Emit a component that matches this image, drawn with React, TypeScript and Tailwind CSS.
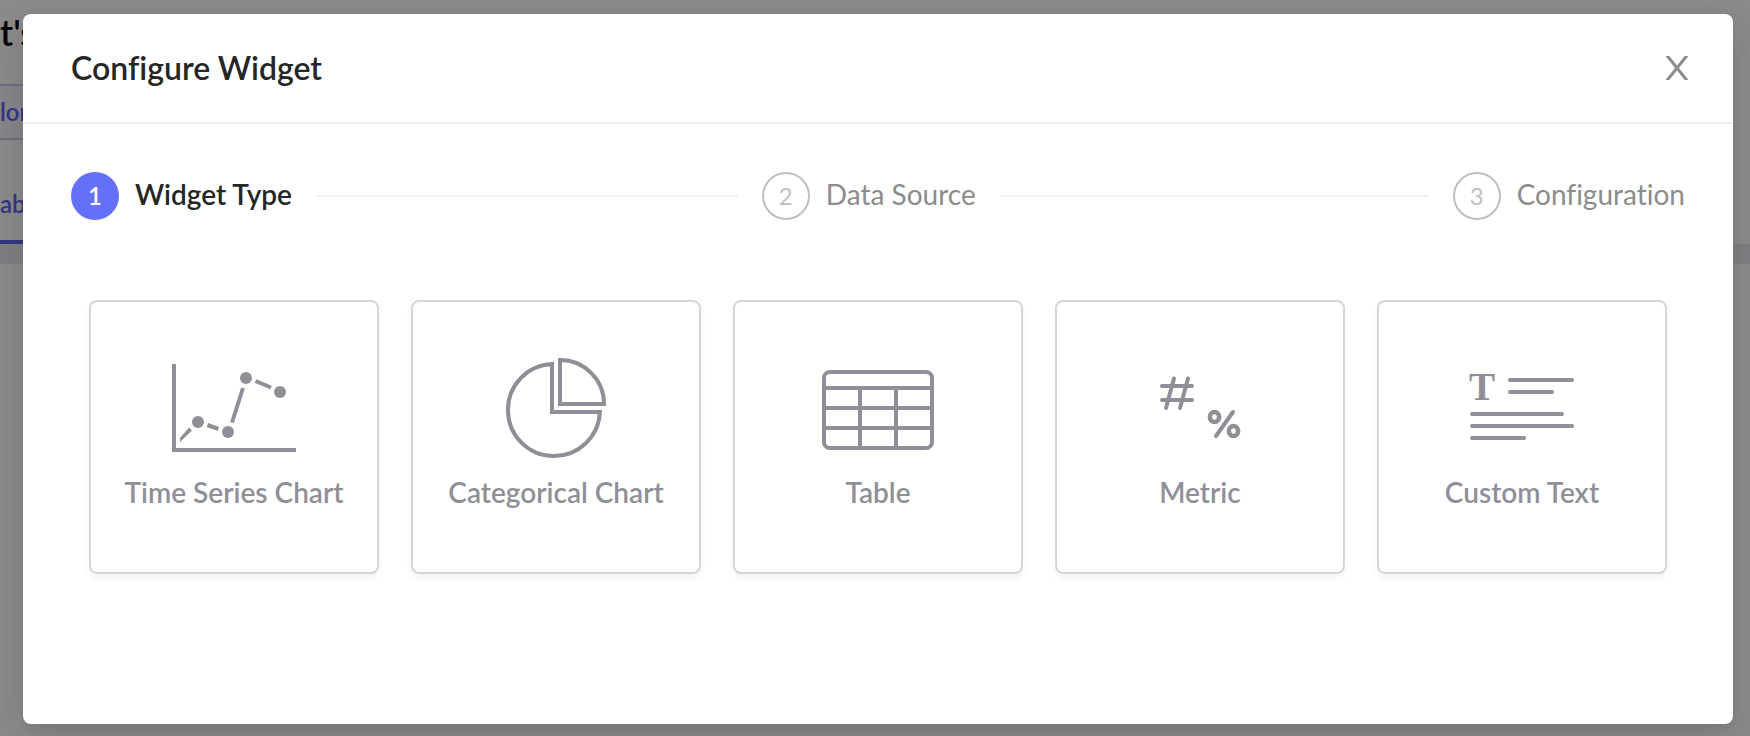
import React, { useState } from "react";

const TimeSeriesIcon = () => (
  <svg width="128" height="104" viewBox="0 0 128 104" fill="none" stroke="currentColor" strokeWidth="4" aria-hidden="true">
    <path d="M4 8V94H126" />
    <path d="M10 87V82L19 71.5L22 74.5L10 86Z" fill="currentColor" stroke="none" />
    <path d="M37.5 69L48.5 73M62 66.5L73 32M85.5 25L101 31.5" />
    <g fill="currentColor" stroke="none">
      <circle cx="28" cy="66" r="6" />
      <circle cx="58" cy="76" r="6" />
      <circle cx="76" cy="22" r="6" />
      <circle cx="110" cy="36" r="6" />
    </g>
  </svg>
);

const CategoricalIcon = () => (
  <svg width="128" height="104" viewBox="0 0 128 104" fill="none" stroke="currentColor" strokeWidth="4" aria-hidden="true">
    <path d="M60 8.1A46 46 0 1 0 107.9 56H60Z" />
    <path d="M68 4A44 44 0 0 1 112 48H68Z" />
  </svg>
);

const TableIcon = () => (
  <svg width="128" height="104" viewBox="0 0 128 104" fill="none" stroke="currentColor" strokeWidth="4" aria-hidden="true">
    <rect x="10" y="16" width="108" height="76" rx="6" />
    <path d="M10 32H118M10 52H118M10 72H118M46 32V92M82 32V92" />
  </svg>
);

const MetricIcon = () => (
  <svg width="128" height="104" viewBox="0 0 128 104" fill="none" stroke="currentColor" strokeWidth="4" strokeLinecap="round" aria-hidden="true">
    <path d="M26 30H56M26 44H56M38 22.5L30 52M52 22.5L44 52" />
    <path d="M97 56L80 80" />
    <ellipse cx="78.500" cy="61" rx="4.600" ry="5" strokeWidth="4.600" />
    <ellipse cx="97.500" cy="75" rx="4.600" ry="5" strokeWidth="4.600" />
  </svg>
);

const CustomTextIcon = () => (
  <svg width="128" height="104" viewBox="0 0 128 104" fill="none" stroke="currentColor" strokeWidth="4" strokeLinecap="round" aria-hidden="true">
    <text x="24" y="44" textAnchor="middle" fontSize="39" fontWeight="700" fill="currentColor" stroke="none" className="font-['Liberation_Serif',serif]">
      T
    </text>
    <path d="M52 24H114M52 36H94M14 58H104M14 70H114M14 82H66" />
  </svg>
);

const widgetTypes = [
  { id: "time-series", label: "Time Series Chart", icon: <TimeSeriesIcon /> },
  { id: "categorical", label: "Categorical Chart", icon: <CategoricalIcon /> },
  { id: "table", label: "Table", icon: <TableIcon /> },
  { id: "metric", label: "Metric", icon: <MetricIcon /> },
  { id: "custom-text", label: "Custom Text", icon: <CustomTextIcon /> },
];

const steps = ["Widget Type", "Data Source", "Configuration"];

const PageBehind = () => (
  <div className="min-h-screen bg-white" aria-hidden="true">
    <div className="flex h-21 items-start pt-3 text-4xl font-semibold text-black">t's</div>
    <div className="flex h-14 w-40 items-center border-y-2 border-[#c8cbf5] bg-[#f7f7ff] text-2xl font-semibold text-[#5f67f5]">
      lor
    </div>
    <div className="flex h-26 w-40 items-center border-b-4 border-[#5f67f5] pt-7 text-2xl font-semibold text-[#5f67f5]">
      abe
    </div>
    <div className="h-5 border-b border-[#e4e7ec] bg-[#e9ecf2]" />
  </div>
);

const App = () => {
  const [open, setOpen] = useState(true);
  const [selected, setSelected] = useState("");

  return (
    <div className="relative min-h-screen overflow-hidden font-[Lato,sans-serif] [font-variant-ligatures:none]">
      <PageBehind />
      {open && (
        <div className="absolute inset-0 bg-black/45 pt-[14px] pr-[17px] pb-3 pl-[23px]">
          <div
            role="dialog"
            aria-labelledby="dialog-title"
            className="rounded-lg bg-white shadow-[0_6px_12px_-8px_rgba(0,0,0,0.12),0_12px_32px_0_rgba(0,0,0,0.08),0_18px_56px_16px_rgba(0,0,0,0.05)]"
          >
            <header className="flex items-center justify-between border-b-2 border-[#f0f0f0] px-12 py-8">
              <h2 id="dialog-title" className="text-[32px] leading-11 font-semibold text-[#262626]">
                Configure Widget
              </h2>
              <button
                type="button"
                aria-label="Close"
                onClick={() => setOpen(false)}
                className="-mr-3 flex size-10 items-center justify-center text-[#8c8c8c]"
              >
                <svg width="24" height="24" viewBox="0 0 24 24" fill="none" stroke="currentColor" strokeWidth="3" aria-hidden="true">
                  <path d="M2 -0.500L22 24.500M22 -0.500L2 24.500" />
                </svg>
              </button>
            </header>

            <div className="px-12 pt-12 pb-[150px]">
              <ol className="flex items-center gap-6">
                {steps.map((step, index) => (
                  <li
                    key={step}
                    className={
                      index < steps.length - 1
                        ? "flex flex-1 basis-0 items-center gap-4"
                        : "flex items-center gap-4"
                    }
                  >
                    <span
                      className={
                        index === 0
                          ? "flex size-12 shrink-0 items-center justify-center rounded-full bg-[#6470f8] text-2xl font-semibold text-white"
                          : "flex size-12 shrink-0 items-center justify-center rounded-full border-2 border-[#bfbfbf] text-2xl text-[#bfbfbf]"
                      }
                    >
                      {index + 1}
                    </span>
                    <span
                      className={
                        index === 0
                          ? "pb-1 text-[28px] leading-10 font-semibold whitespace-nowrap text-[#262626]"
                          : "pb-1 text-[28px] leading-10 whitespace-nowrap text-[#8c8c8c]"
                      }
                    >
                      {step}
                    </span>
                    {index < steps.length - 1 && (
                      <span className="ml-2 h-0.5 flex-1 bg-[#f0f0f0]" />
                    )}
                  </li>
                ))}
              </ol>

              <div className="mt-20 grid grid-cols-5 gap-8 px-[18px]">
                {widgetTypes.map((type) => (
                  <button
                    key={type.id}
                    type="button"
                    aria-pressed={selected === type.id}
                    onClick={() => setSelected(type.id)}
                    className="flex flex-col items-center rounded-lg border-2 border-[#d6d6d8] pt-[54px] pb-[60px] text-[#8f8f98] shadow-[0_4px_6px_rgba(0,0,0,0.05)]"
                  >
                    {type.icon}
                    <span className="mt-3 text-[28px] leading-10 font-semibold whitespace-nowrap">
                      {type.label}
                    </span>
                  </button>
                ))}
              </div>
            </div>
          </div>
        </div>
      )}
    </div>
  );
};

export default App;
